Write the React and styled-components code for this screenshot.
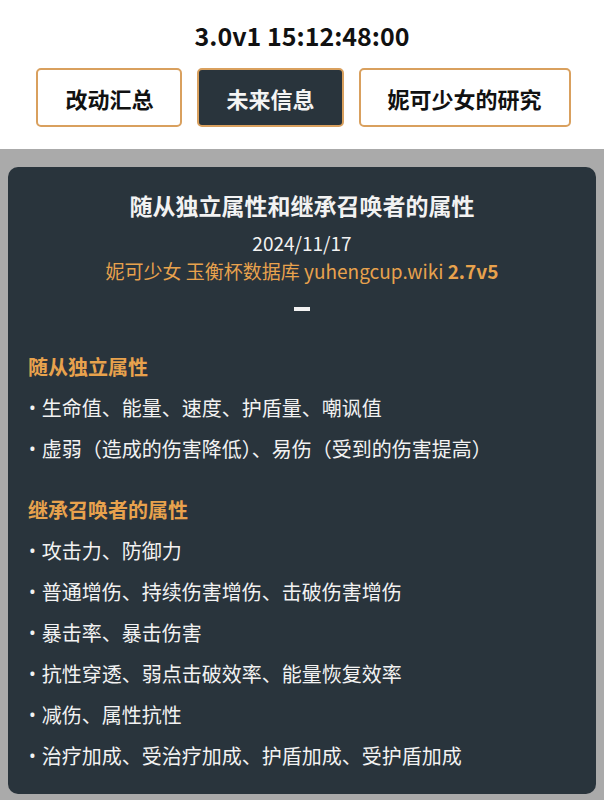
import React from "react";
import styled, { createGlobalStyle } from "styled-components";

const GlobalStyle = createGlobalStyle`
  html, body {
    margin: 0;
    padding: 0;
    background: #aaaaaa;
    font-family: "Noto Sans CJK SC", "Noto Sans", sans-serif;
  }
`;

const tabs = [
  { label: "改动汇总", active: false },
  { label: "未来信息", active: true },
  { label: "妮可少女的研究", active: false },
];

const sections = [
  {
    heading: "随从独立属性",
    items: [
      "生命值、能量、速度、护盾量、嘲讽值",
      "虚弱（造成的伤害降低）、易伤（受到的伤害提高）",
    ],
  },
  {
    heading: "继承召唤者的属性",
    items: [
      "攻击力、防御力",
      "普通增伤、持续伤害增伤、击破伤害增伤",
      "暴击率、暴击伤害",
      "抗性穿透、弱点击破效率、能量恢复效率",
      "减伤、属性抗性",
      "治疗加成、受治疗加成、护盾加成、受护盾加成",
    ],
  },
];

function App() {
  return (
    <>
      <GlobalStyle />
      <Header>
        <Version>3.0v1 15:12:48:00</Version>
        <TabRow>
          {tabs.map((tab) => (
            <Tab key={tab.label} $active={tab.active}>
              {tab.label}
            </Tab>
          ))}
        </TabRow>
      </Header>
      <Body>
        <Card>
          <CardTitle>随从独立属性和继承召唤者的属性</CardTitle>
          <DateLine>2024/11/17</DateLine>
          <Source>
            妮可少女 玉衡杯数据库 yuhengcup.wiki <b>2.7v5</b>
          </Source>
          <Dash />
          {sections.map((section) => (
            <Section key={section.heading}>
              <SectionHeading>{section.heading}</SectionHeading>
              {section.items.map((item) => (
                <Item key={item}>
                  <Bullet>•</Bullet>
                  {item}
                </Item>
              ))}
            </Section>
          ))}
        </Card>
      </Body>
    </>
  );
}

const Header = styled.div`
  background: #ffffff;
  display: flex;
  flex-direction: column;
  align-items: center;
  padding: 20px 0 22px;
  gap: 18px;
`;

const Version = styled.div`
  font-size: 25px;
  font-weight: 700;
  line-height: 30px;
  color: #111;
`;

const TabRow = styled.div`
  display: flex;
  gap: 15px;
  margin-left: 3px;
`;

const Tab = styled.button`
  height: 59px;
  padding: 0 27px;
  border: 2px solid #d9a05e;
  border-radius: 5px;
  background: ${(p) => (p.$active ? "#29343c" : "#ffffff")};
  color: ${(p) => (p.$active ? "#f4f4f4" : "#111111")};
  font-family: "Noto Sans CJK SC", sans-serif;
  font-size: 22px;
  font-weight: 700;
  cursor: pointer;
`;

const Body = styled.div`
  padding: 18px 8px 7px;
`;

const Card = styled.div`
  background: #29343c;
  border-radius: 10px;
  padding: 21px 20px 18px;
  color: #f2f2f2;
`;

const CardTitle = styled.div`
  text-align: center;
  font-size: 23px;
  font-weight: 700;
  line-height: 34px;
  margin-bottom: 7px;
`;

const DateLine = styled.div`
  text-align: center;
  font-size: 19px;
  line-height: 28px;
`;

const Source = styled.div`
  text-align: center;
  font-size: 19px;
  line-height: 28px;
  color: #e8a24d;

  b {
    font-weight: 700;
  }
`;

const Dash = styled.div`
  width: 16px;
  height: 4px;
  background: #f2f2f2;
  margin: 22px auto 35px;
`;

const Section = styled.div`
  margin-bottom: 20px;

  &:last-child {
    margin-bottom: 0;
  }
`;

const SectionHeading = styled.div`
  font-size: 20px;
  font-weight: 700;
  color: #e8a24d;
  height: 41px;
  line-height: 41px;
`;

const Item = styled.div`
  display: flex;
  align-items: center;
  height: 41px;
  font-size: 20px;
  line-height: 41px;
  padding-left: 1px;
`;

const Bullet = styled.span`
  font-family: "Noto Sans", sans-serif;
  font-size: 18px;
  margin-right: 6px;
`;

export default App;
